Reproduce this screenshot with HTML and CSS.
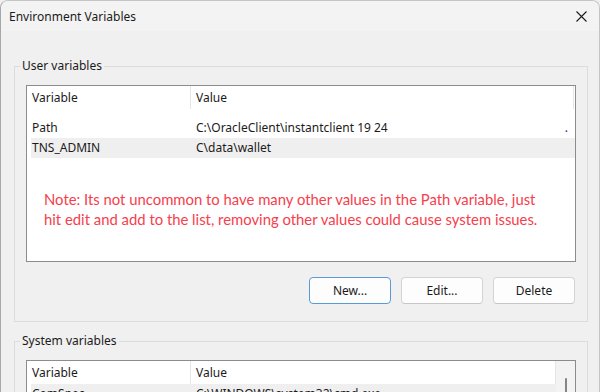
FILE: index.html
```html
<!DOCTYPE html>
<html lang="en">
<head>
  <meta charset="UTF-8" />
  <title>Environment Variables</title>
  <link rel="stylesheet" href="styles.css">
</head>
<body>
  <div class="window">
    <div class="titlebar">
      <span class="title">Environment Variables</span>
      <svg class="close" width="11" height="11" viewBox="0 0 11 11">
        <path d="M0.5 0.5 L10.5 10.5 M10.5 0.5 L0.5 10.5" stroke="#1b1b1b" stroke-width="1.1" fill="none"/>
      </svg>
    </div>

    <div class="content">
      <fieldset class="group">
        <legend>User variables</legend>
        <div class="list user-list">
          <div class="list-head">
            <div class="cell">Variable</div>
            <div class="cell">Value</div>
          </div>
          <div class="rows">
            <div class="row">
              <span>Path</span>
              <span class="val">C:\OracleClient\instantclient 19 24<span class="dot">.</span></span>
            </div>
            <div class="row selected">
              <span>TNS_ADMIN</span>
              <span class="val">C\data\wallet</span>
            </div>
          </div>
          <p class="note">Note: Its not uncommon to have many other values in the Path variable, just hit edit and add to the list, removing other values could cause system issues.</p>
        </div>
        <div class="buttons">
          <button class="primary">New...</button>
          <button>Edit...</button>
          <button>Delete</button>
        </div>
      </fieldset>

      <fieldset class="group system">
        <legend>System variables</legend>
        <div class="list sys-list">
          <div class="list-main">
            <div class="list-head">
              <div class="cell">Variable</div>
              <div class="cell">Value</div>
            </div>
            <div class="row selected">
              <span>ComSpec</span>
              <span class="val">C:\WINDOWS\system32\cmd.exe</span>
            </div>
          </div>
          <div class="scrollbar"><div class="thumb"></div></div>
        </div>
      </fieldset>
    </div>
  </div>
</body>
</html>
```

FILE: styles.css
```css
body {
  margin: 0;
  background: #f0f0f0;
  font-family: 'Noto Sans', 'Open Sans', sans-serif;
  font-size: 12px;
  color: #1b1b1b;
  overflow: hidden;
}

.window {
  width: 600px;
  height: 392px;
  box-sizing: border-box;
  border: 1px solid #c4c4c4;
  border-left-color: #a8a8a8;
  border-bottom: none;
  border-radius: 8px 8px 0 0;
  background: #f0f0f0;
  overflow: hidden;
}

.titlebar {
  height: 30px;
  display: flex;
  align-items: center;
  justify-content: space-between;
  padding: 0 12px 0 8px;
  background: #f3f3f3;
}

.content {
  padding: 27px 11px 0 13px;
}

.group {
  margin: 0;
  padding: 11px 11px 17px;
  border: 1px solid #dcdcdc;
  min-width: 0;
}

.group.system {
  margin-top: 11px;
}

legend {
  padding: 0 2px;
  margin-left: -6px;
  line-height: 16px;
}

.list {
  background: #fff;
  border: 1px solid #8c8c8c;
  box-sizing: border-box;
}

.user-list {
  height: 177px;
}

.list-head {
  display: grid;
  grid-template-columns: 164px 1fr;
  height: 23px;
  line-height: 23px;
}

.list-head .cell {
  padding-left: 5px;
  border-right: 1px solid #e5e5e5;
}

.user-list .list-head {
  margin-right: 1px;
}

.rows {
  margin-top: 9px;
}

.row {
  display: grid;
  grid-template-columns: 164px 1fr;
  height: 20px;
  line-height: 20px;
  margin-left: 4px;
  padding-left: 1px;
}

.row.selected {
  background: #efefef;
}

.val {
  display: flex;
  justify-content: space-between;
  padding-right: 7px;
}

.dot {
  color: #1c2a6b;
}

.note {
  margin: 31px 20px 0 17px;
  font-family: Lato, 'Noto Sans', sans-serif;
  font-size: 14.85px;
  line-height: 20px;
  color: #f63e4c;
}

.buttons {
  display: flex;
  justify-content: flex-end;
  gap: 10px;
  margin-top: 15px;
  padding-right: 1px;
}

button {
  width: 82px;
  height: 27px;
  background: #fdfdfd;
  border: 1px solid #d4d4d4;
  border-bottom-color: #c6c6c6;
  border-radius: 4px;
  font: inherit;
  color: #1b1b1b;
  padding: 0;
}

button.primary {
  border-color: #5a9ad6;
}

.sys-list {
  display: flex;
  height: 60px;
}

.list-main {
  flex: 1;
}

.scrollbar {
  width: 19px;
  background: #f3f3f3;
  display: flex;
  justify-content: center;
}

.thumb {
  width: 2px;
  height: 40px;
  margin-top: 17px;
  background: #858585;
  border-radius: 1px;
}
```
